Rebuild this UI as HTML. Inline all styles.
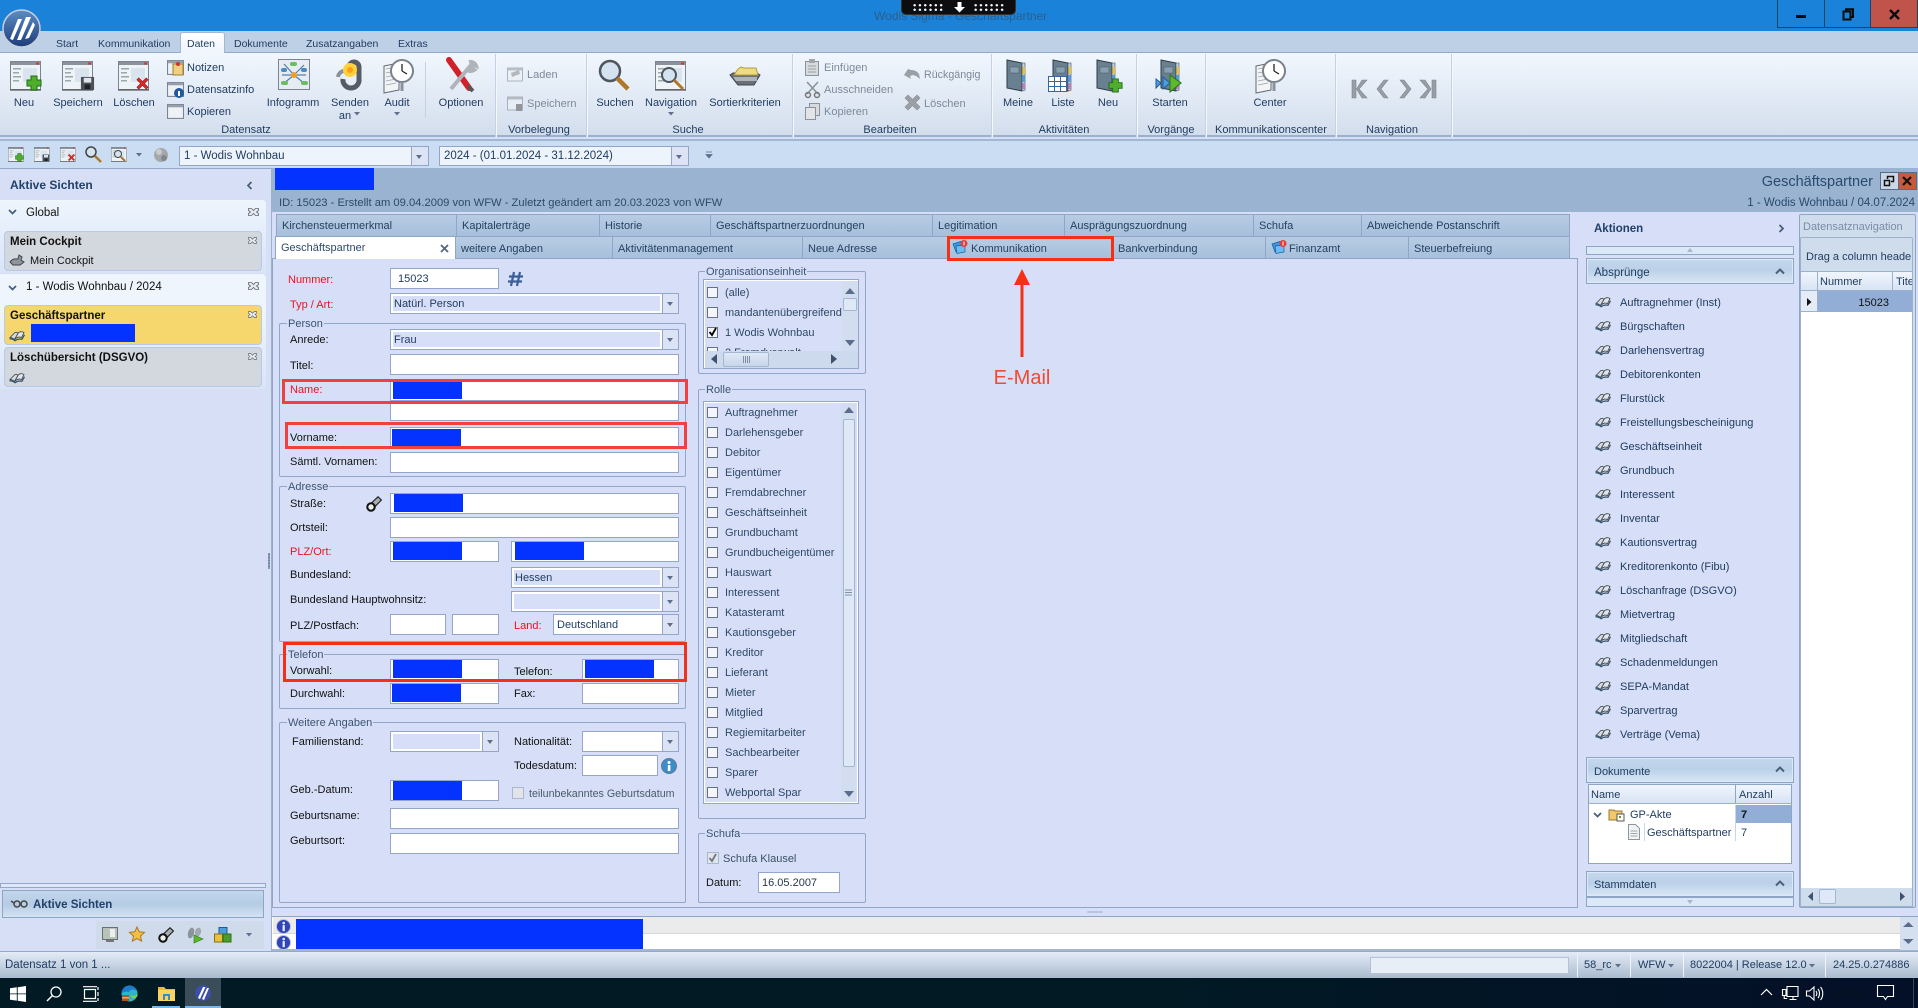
<!DOCTYPE html>
<html lang="de"><head><meta charset="utf-8"><title>Wodis Sigma - Geschäftspartner</title>
<style>
html,body{margin:0;padding:0;width:1918px;height:1008px;overflow:hidden;background:#d6dff7}
body{position:relative;font:11px/14px "Liberation Sans",sans-serif;color:#1e3a5f}
div,span,svg{position:absolute;box-sizing:border-box}
.t{white-space:nowrap;height:14px;margin-top:1px}
.l{width:110px;text-align:center;white-space:nowrap;height:14px;margin-top:1px}
.k{color:#111}.e{color:#ee1122}
.i{background:#fff;border:1px solid #93a5c8;color:#1e3a5f;padding:3px 0 0 7px;white-space:nowrap;height:21px}
.a{right:0;top:0;bottom:0;width:16px;border-left:1px solid #93a5c8;background:#dbe3f4}
.a:after{content:"";position:absolute;left:4px;top:8px;border:3px solid transparent;border-top:4px solid #5d6f8c;border-bottom:0}
.f{left:2px;top:2px;bottom:2px;right:18px;background:#d6dff7;padding:1px 0 0 1px;line-height:14px;color:#1e3a5f}
.b{background:#0433ff}
.rb{border:3px solid #f24040}
.c{width:11px;height:11px;background:#f3f5fb;border:1px solid #69727f;left:707px}
.cl{left:725px;color:#2d4866}
.g{border:1px solid #93a5c8;border-radius:2px}
.lg{background:#d6dff7;padding:0 1px;color:#3b5472;height:14px;white-space:nowrap;margin-top:1px}
.tab{height:23px;background:linear-gradient(#b8cde4,#a7bfdb);border:1px solid #8fa6c6;border-bottom:0;color:#24415f;padding:5px 0 0 5px;white-space:nowrap}
.hd{background:linear-gradient(#c4d8ec,#bbd1e8 45%,#d8e6f4);border:1px solid #8ea6c6;left:1586px;width:208px;height:26px;box-shadow:inset 0 0 0 1px #dce9f6}
.sep{width:1px;top:54px;height:83px;background:#c5d2e4;box-shadow:1px 0 #f4f8fd}
.ch{color:#425a78;font-weight:bold}
.rt{font-size:10.500px}
svg{overflow:visible}
</style></head><body>
<svg width="0" height="0" style="left:0;top:0">
<defs>
<symbol id="win" viewBox="0 0 32 30"><rect x=".5" y=".5" width="30" height="28" fill="#eef3f8" stroke="#7c8490"/><rect x="1" y="1" width="29" height="3" fill="#8a929e"/><rect x="26" y="1.5" width="3" height="2" fill="#d33"/><rect x="3" y="7" width="8" height="1.5" fill="#9aa"/><rect x="3" y="11" width="6" height="1.5" fill="#9aa"/><rect x="3" y="15" width="8" height="1.5" fill="#9aa"/><rect x="3" y="19" width="6" height="1.5" fill="#9aa"/><rect x="13" y="7" width="14" height="14" fill="#d9e4ef"/><rect x="0" y="28" width="31" height="2" fill="#555" opacity=".6"/></symbol>
<symbol id="plus" viewBox="0 0 16 16"><path d="M5 1h6v4h4v6h-4v4H5v-4H1V5h4z" fill="#4fae2c" stroke="#1f6e12"/></symbol>
<symbol id="x" viewBox="0 0 16 16"><path d="M2 4l2-2 4 4 4-4 2 2-4 4 4 4-2 2-4-4-4 4-2-2 4-4z" fill="#dc2a2a" stroke="#951414" stroke-width=".6"/></symbol>
<symbol id="floppy" viewBox="0 0 16 16"><rect x="1" y="1" width="14" height="14" fill="#4c5058"/><rect x="4" y="2" width="8" height="5" fill="#dfe5ec"/><rect x="5" y="9" width="6" height="5" fill="#1f2226"/></symbol>
<symbol id="book" viewBox="0 0 16 12"><path d="M1 7.500L6 2.500c1.500-.5 2.500 0 3 1L5.500 9.500C4 8 2.500 7.500 1 7.500z" fill="#d6dbe0" stroke="#3c444d" stroke-width=".8"/><path d="M9 3.500C10 2 12 1 15 2.500L12.500 7.500c-2.500-1-5 0-7 2z" fill="#e2e6ea" stroke="#3c444d" stroke-width=".8"/><path d="M.5 8.700c2 0 4 .5 5.500 2 2-1.500 4.500-2 7-1.500l2.500-4.500" fill="none" stroke="#34546f" stroke-width="1.300"/></symbol>
<symbol id="folder" viewBox="0 0 24 36"><path d="M3 2l15 3v28L3 30z" fill="#68808f" stroke="#2d3a45"/><path d="M18 5h3v27l-3 1z" fill="#c8d1d8" stroke="#3d4a55" stroke-width=".6"/><rect x="18.500" y="9" width="2.500" height="7" fill="#e8c23a"/><rect x="18.500" y="17" width="2.500" height="7" fill="#4fa0d8"/><rect x="18.500" y="25" width="2.500" height="6" fill="#c47ac4"/><rect x="6" y="9" width="9" height="6" fill="#88a0ae" stroke="#4a5a66" stroke-width=".5"/></symbol>
<symbol id="clock" viewBox="0 0 32 36"><path d="M2 8l15-3v27l-15 3z" fill="#f2f4f6" stroke="#616a74"/><path d="M4 11l10-2M4 15l10-2M4 19l10-2M4 23l10-2M4 27l10-2" stroke="#9aa3ad" stroke-width=".8"/><circle cx="20" cy="13" r="11" fill="#fff" stroke="#7a828c" stroke-width="2"/><path d="M20 13V6M20 13l5 3" stroke="#222" stroke-width="1.300" fill="none"/><rect x="18.500" y="24" width="3" height="9" fill="#8a929c"/></symbol>
<symbol id="mini" viewBox="0 0 16 16"><rect x=".5" y="1.500" width="15" height="13" fill="#eef2f7" stroke="#7c8490"/><rect x="1" y="2" width="14" height="2" fill="#939ba6"/></symbol>
<symbol id="mail" viewBox="0 0 16 14"><path d="M1 4l8-2.500 2 7.500-7 3z" fill="#3f9ae0" stroke="#135b9e" stroke-width=".7"/><path d="M4 6l9-1v7l-8 1.500z" fill="#6cbcf2" stroke="#135b9e" stroke-width=".7"/><circle cx="12" cy="3.500" r="3.500" fill="#e93a3a"/><rect x="11.500" y="1.500" width="1" height="4" fill="#fff"/></symbol>
<symbol id="info" viewBox="0 0 16 16"><circle cx="8" cy="8" r="7.500" fill="#2f45b8" stroke="#c3c8d4" stroke-width="1"/><rect x="7" y="6.500" width="2.400" height="6.500" fill="#e8ecf8"/><circle cx="8.200" cy="4.300" r="1.400" fill="#e8ecf8"/></symbol>
<symbol id="cl" viewBox="0 0 11 8"><path d="M.5.5h3l2 2 2-2h3v2l-2 1.500 2 1.500v2h-3l-2-2-2 2h-3v-2l2-1.500-2-1.500z" fill="#e8eaef" stroke="#5f6772" stroke-width=".8"/></symbol>
<symbol id="torch" viewBox="0 0 16 16"><path d="M6 6.500L12 .8 15.400 4 9.500 10z" fill="#a9aeb3" stroke="#222" stroke-width="1.200"/><circle cx="5" cy="11" r="3.700" fill="#eee" stroke="#111" stroke-width="2"/></symbol>
</defs></svg>

<!-- title bar -->
<div style="left:0;top:0;width:1918px;height:31px;background:#1a82d8"></div>
<div class="t" style="left:874px;top:8px;color:#2b5f8e;font-size:12px">Wodis Sigma - Geschäftspartner</div>
<div style="left:901px;top:0;width:115px;height:15px;background:#0d0d10;border:1px solid #333;border-top:0;border-radius:0 0 5px 5px"></div>
<div style="left:912px;top:3px;width:32px;height:8px;background-image:radial-gradient(#fff 1.200px,transparent 1.400px);background-size:5.300px 4.500px"></div>
<div style="left:973px;top:3px;width:32px;height:8px;background-image:radial-gradient(#fff 1.200px,transparent 1.400px);background-size:5.300px 4.500px"></div>
<svg style="left:954px;top:2px" width="11" height="11"><path d="M3.500 0h4v5h3.500L5.500 10.500 0 5h3.500z" fill="#fff"/></svg>
<div style="left:1777px;top:0;width:48px;height:28px;background:#1a82d8;border:1px solid #21425e;border-top:0"></div>
<div style="left:1825px;top:0;width:46px;height:28px;background:#1a82d8;border:1px solid #21425e;border-top:0;border-left:0"></div>
<div style="left:1871px;top:0;width:47px;height:28px;background:#c1544a;border:1px solid #21425e;border-top:0;border-left:0"></div>
<div style="left:1796px;top:15px;width:10px;height:3px;background:#0b0b0b"></div>
<svg style="left:1842px;top:8px" width="12" height="13"><path d="M1.500 3.500h7v8h-7zM4 3V1.200h7V9H9" fill="none" stroke="#0b0b0b" stroke-width="2"/></svg>
<svg style="left:1889px;top:9px" width="11" height="11"><path d="M1 1l9 9M10 1l-9 9" stroke="#0b0b0b" stroke-width="2.400"/></svg>
<!-- logo -->
<div style="left:0;top:31px;width:1918px;height:21px;background:#bed0e6"></div>
<div style="left:0;top:52px;width:1918px;height:1px;background:#93a9c7"></div>
<svg style="left:2px;top:9px" width="39" height="39" viewBox="0 0 39 39"><defs><linearGradient id="lg1" x1="0" y1="0" x2="0" y2="1"><stop offset="0" stop-color="#5d8cc4"/><stop offset="1" stop-color="#1d3c7a"/></linearGradient></defs><circle cx="19.500" cy="19.500" r="18.500" fill="url(#lg1)" stroke="#c6ced8" stroke-width="1.500"/><path d="M8 30L16 10h4L11 31zM15 31L24 8h5l-10 23zM23 30l8-17 2 3-6 13z" fill="#fff"/></svg>
<!-- ribbon tabs -->
<div style="left:180px;top:32px;width:45px;height:21px;background:linear-gradient(#fff,#eef5fd);border:1px solid #a4b7d1;border-bottom:0;border-radius:3px 3px 0 0"></div>
<div class="t rt" style="left:56px;top:36px">Start</div>
<div class="t rt" style="left:98px;top:36px">Kommunikation</div>
<div class="t rt" style="left:187px;top:36px">Daten</div>
<div class="t rt" style="left:234px;top:36px">Dokumente</div>
<div class="t rt" style="left:306px;top:36px">Zusatzangaben</div>
<div class="t rt" style="left:398px;top:36px">Extras</div>
<!-- ribbon -->
<div style="left:0;top:53px;width:1918px;height:84px;background:linear-gradient(#f1f7fe,#d3deed);border-bottom:2px solid #9bb0cc"></div>
<div class="sep" style="left:495px"></div><div class="sep" style="left:586px"></div><div class="sep" style="left:792px"></div><div class="sep" style="left:991px"></div><div class="sep" style="left:1136px"></div><div class="sep" style="left:1205px"></div><div class="sep" style="left:1335px"></div><div class="sep" style="left:1451px"></div>
<div style="left:425px;top:62px;width:1px;height:55px;background:#c5d2e4"></div>

<svg style="left:10px;top:61px" width="32" height="30"><use href="#win" width="32" height="30"/><use href="#plus" x="16" y="14" width="16" height="16"/></svg>
<svg style="left:62px;top:61px" width="32" height="30"><use href="#win" width="32" height="30"/><use href="#floppy" x="18" y="15" width="15" height="15"/></svg>
<svg style="left:118px;top:61px" width="32" height="30"><use href="#win" width="32" height="30"/><use href="#x" x="17" y="15" width="15" height="15"/></svg>
<svg style="left:167px;top:59px" width="17" height="17"><use href="#mini" width="17" height="17"/><rect x="6" y="5" width="10" height="11" fill="#eed080" stroke="#a08030"/><circle cx="11" cy="5" r="2" fill="#c33"/></svg>
<svg style="left:167px;top:81px" width="17" height="17"><use href="#mini" width="17" height="17"/><circle cx="12" cy="12" r="5" fill="#1e5a9c"/><rect x="11" y="10" width="2" height="5" fill="#fff"/></svg>
<svg style="left:167px;top:103px" width="17" height="17"><use href="#mini" width="17" height="17"/></svg>
<div class="t" style="left:187px;top:60px">Notizen</div><div class="t" style="left:187px;top:82px">Datensatzinfo</div><div class="t" style="left:187px;top:104px">Kopieren</div>
<svg style="left:278px;top:59px" width="32" height="31" viewBox="0 0 32 31"><rect x=".5" y=".5" width="31" height="30" fill="#e6ecf2" stroke="#7c8490"/><path d="M16 16L6 5M16 16L26 6M16 16L5 25M16 16L27 25M16 16H4M16 16h12" stroke="#4f7fb5" stroke-width="1.200"/><rect x="12" y="3" width="7" height="4" rx="2" fill="#6bbd5e"/><rect x="3" y="9" width="6" height="4" rx="2" fill="#4d8ac4"/><rect x="23" y="9" width="6" height="4" rx="2" fill="#4d8ac4"/><rect x="3" y="22" width="7" height="4" rx="2" fill="#6bbd5e"/><rect x="23" y="22" width="7" height="4" rx="2" fill="#6bbd5e"/><circle cx="16" cy="16" r="3" fill="#f0a020"/></svg>
<svg style="left:334px;top:59px" width="30" height="32" viewBox="0 0 30 32"><path d="M9 20a8 8 0 0 0 8 9 8 8 0 0 0 8-9V8a5 5 0 0 0-10 0" fill="none" stroke="#555c63" stroke-width="5"/><path d="M4 18a7 7 0 0 1 12-4" fill="none" stroke="#8b9299" stroke-width="4"/><circle cx="16" cy="11" r="7" fill="#ffd23c"/><circle cx="16" cy="11" r="3" fill="#ff9d1c"/></svg>
<svg style="left:382px;top:58px" width="32" height="36"><use href="#clock" width="32" height="36"/></svg>
<svg style="left:445px;top:58px" width="33" height="36" viewBox="0 0 33 36"><path d="M4 2L24 30" stroke="#d0222a" stroke-width="6" stroke-linecap="round"/><path d="M6 31L26 7M24 4a6 6 0 0 1 7 4l-4-1-2 3 4 2a6 6 0 0 1-8-1" fill="none" stroke="#aeb4ba" stroke-width="4"/><path d="M23 28l5 5" stroke="#555" stroke-width="4"/></svg>
<div class="l" style="left:-31px;top:95px">Neu</div>
<div class="l" style="left:23px;top:95px">Speichern</div>
<div class="l" style="left:79px;top:95px">Löschen</div>
<div class="l" style="left:238px;top:95px">Infogramm</div>
<div class="l" style="left:295px;top:95px">Senden</div>
<div class="l" style="left:290px;top:108px">an</div>
<div class="l" style="left:342px;top:95px">Audit</div>
<div class="l" style="left:406px;top:95px">Optionen</div>
<svg style="left:354px;top:112px" width="7" height="5"><path d="M0 0h6L3 3.500z" fill="#5d6f8c"/></svg>
<svg style="left:394px;top:112px" width="7" height="5"><path d="M0 0h6L3 3.500z" fill="#5d6f8c"/></svg>
<!-- Vorbelegung -->
<svg style="left:507px;top:66px" width="16" height="17" opacity=".55"><use href="#mini" width="16" height="17"/><path d="M4 7l8-3 1 4-8 3z" fill="#888"/></svg>
<svg style="left:507px;top:95px" width="16" height="17" opacity=".55"><use href="#mini" width="16" height="17"/><rect x="9" y="9" width="6" height="7" fill="#555"/></svg>
<div class="t" style="left:527px;top:67px;color:#7e8a99">Laden</div>
<div class="t" style="left:527px;top:96px;color:#7e8a99">Speichern</div>
<!-- Suche -->
<svg style="left:598px;top:59px" width="33" height="32" viewBox="0 0 33 32"><circle cx="12" cy="12" r="10" fill="#d5e2ef" stroke="#4e555d" stroke-width="2.500"/><path d="M19 19l11 11" stroke="#b0772b" stroke-width="4.500"/></svg>
<svg style="left:655px;top:61px" width="32" height="30"><use href="#win" width="32" height="30"/><circle cx="14" cy="14" r="7" fill="#d5e2ef" stroke="#4e555d" stroke-width="2"/><path d="M19 19l9 9" stroke="#b0772b" stroke-width="3"/></svg>
<svg style="left:729px;top:62px" width="32" height="28" viewBox="0 0 32 28"><path d="M1 13l8 10h16l6-10-3-2H4z" fill="#6a7076" stroke="#40464c"/><path d="M5 13l4-6 3-2 3 1h12l2 7z" fill="#f0dc80" stroke="#b09c40"/><path d="M4 15h24v4H7z" fill="#aeb4ba"/></svg>
<div class="l" style="left:560px;top:95px">Suchen</div>
<div class="l" style="left:616px;top:95px">Navigation</div>
<div class="l" style="left:690px;top:95px">Sortierkriterien</div>
<svg style="left:668px;top:112px" width="7" height="5"><path d="M0 0h6L3 3.500z" fill="#5d6f8c"/></svg>
<!-- Bearbeiten -->
<svg style="left:805px;top:59px" width="14" height="17"><rect x=".5" y="2.500" width="13" height="14" fill="#d8dbde" stroke="#8c929a"/><rect x="4" y="0" width="6" height="4" fill="#a0a6ac"/><path d="M3 7h8M3 10h8M3 13h8" stroke="#9aa0a6"/></svg>
<svg style="left:805px;top:81px" width="15" height="17"><path d="M2 1l11 12M13 1L2 13" stroke="#8c929a" stroke-width="1.600"/><circle cx="3" cy="14" r="2.500" fill="none" stroke="#777" stroke-width="1.500"/><circle cx="12" cy="14" r="2.500" fill="none" stroke="#777" stroke-width="1.500"/></svg>
<svg style="left:805px;top:103px" width="15" height="17"><rect x="4.500" y=".5" width="10" height="12" fill="#d8dbde" stroke="#8c929a"/><rect x=".5" y="4.500" width="10" height="12" fill="#e2e4e7" stroke="#8c929a"/></svg>
<div class="t" style="left:824px;top:60px;color:#7e8a99">Einfügen</div><div class="t" style="left:824px;top:82px;color:#7e8a99">Ausschneiden</div><div class="t" style="left:824px;top:104px;color:#7e8a99">Kopieren</div>
<svg style="left:904px;top:67px" width="16" height="13"><path d="M0 8l4-6 3 1c3 0 6 1 8 4l1 5-4-3-3-1-3 1 1 3z" fill="#9aa0a6"/></svg>
<svg style="left:904px;top:94px" width="17" height="17"><path d="M1 4l3-3 4.500 4.500L13 1l3 3-4.500 4.500L16 13l-3 3-4.500-4.500L4 16l-3-3 4.500-4.500z" fill="#9aa0a6" stroke="#868c92" stroke-width=".6"/></svg>
<div class="t" style="left:924px;top:67px;color:#7e8a99;font-size:10.700px">Rückgängig</div><div class="t" style="left:924px;top:96px;color:#7e8a99">Löschen</div>
<!-- Aktivitäten -->
<svg style="left:1004px;top:58px" width="24" height="34"><use href="#folder" width="24" height="36"/></svg>
<svg style="left:1048px;top:58px" width="28" height="34"><use href="#folder" x="2" width="24" height="36"/><rect x=".5" y="18.500" width="18" height="15" fill="#fff" stroke="#33689c"/><path d="M6.500 19v14M12.500 19v14M1 23.500h17M1 28.500h17" stroke="#33689c"/></svg>
<svg style="left:1094px;top:58px" width="30" height="36"><use href="#folder" width="24" height="36"/><use href="#plus" x="14" y="20" width="15" height="15"/></svg>
<svg style="left:1156px;top:58px" width="30" height="36"><use href="#folder" x="2" width="24" height="36"/><path d="M0 21l5 4-5 5zM7 19l7 6-7 6zM14 17l11 8-11 9z" fill="#4c9ed8" stroke="#1e5a9c"/><path d="M14 17l11 8-11 9z" fill="#5cb82c" stroke="#2b7412"/></svg>
<div class="l" style="left:963px;top:95px">Meine</div><div class="l" style="left:1008px;top:95px">Liste</div><div class="l" style="left:1053px;top:95px">Neu</div><div class="l" style="left:1115px;top:95px">Starten</div>
<svg style="left:1254px;top:58px" width="32" height="36"><use href="#clock" width="32" height="36"/></svg>
<div class="l" style="left:1215px;top:95px">Center</div>
<!-- nav arrows -->
<svg style="left:1352px;top:80px" width="86" height="19" fill="#989ea5" stroke="#7c838b" stroke-width=".6"><path d="M0 0h4v18H0zM15 0L7 9l8 9h-5L4.500 9 10 0z"/><path d="M36 0l-7 9 7 9h-4l-7-9 7-9z"/><path d="M48 0l7 9-7 9h4l7-9-7-9z"/><path d="M80 0h4v18h-4zM68 0l8 9-8 9h5l6-9-6-9z"/></svg>
<!-- group labels -->
<div class="l" style="left:191px;top:122px">Datensatz</div><div class="l" style="left:484px;top:122px">Vorbelegung</div><div class="l" style="left:633px;top:122px">Suche</div><div class="l" style="left:835px;top:122px">Bearbeiten</div><div class="l" style="left:1009px;top:122px">Aktivitäten</div><div class="l" style="left:1116px;top:122px">Vorgänge</div><div class="l" style="left:1215px;top:122px">Kommunikationscenter</div><div class="l" style="left:1337px;top:122px">Navigation</div>
<!-- quick toolbar -->
<div style="left:0;top:139px;width:1918px;height:2px;background:#a3b7d1"></div>
<div style="left:0;top:141px;width:1918px;height:27px;background:#cbddf2"></div>
<svg style="left:8px;top:147px" width="16" height="15"><use href="#win" width="16" height="15"/><use href="#plus" x="7" y="6" width="9" height="9"/></svg>
<svg style="left:34px;top:147px" width="16" height="15"><use href="#win" width="16" height="15"/><use href="#floppy" x="8" y="7" width="8" height="8"/></svg>
<svg style="left:60px;top:147px" width="16" height="15"><use href="#win" width="16" height="15"/><use href="#x" x="7" y="6" width="9" height="9"/></svg>
<svg style="left:85px;top:146px" width="17" height="16"><circle cx="6" cy="6" r="5" fill="#d5e2ef" stroke="#444" stroke-width="1.500"/><path d="M10 10l6 6" stroke="#b0772b" stroke-width="2.500"/></svg>
<svg style="left:111px;top:147px" width="16" height="15"><use href="#win" width="16" height="15"/><circle cx="7" cy="7" r="3.500" fill="#d5e2ef" stroke="#444"/><path d="M10 10l4 4" stroke="#b0772b" stroke-width="2"/></svg>
<svg style="left:136px;top:153px" width="7" height="5"><path d="M0 0h6L3 3.500z" fill="#5d6f8c"/></svg>
<svg style="left:153px;top:146px" width="17" height="17"><circle cx="8" cy="9" r="7" fill="#a5a8aa"/><circle cx="6" cy="6" r="3" fill="#c8cacb"/><circle cx="11" cy="12" r="3" fill="#83878a"/></svg>
<div class="i" style="left:179px;top:146px;width:250px;height:20px;padding:2px 0 0 4px;background:#eef4fc;color:#1e3a5f;font-size:11.500px">1 - Wodis Wohnbau<div class="a" style="width:17px"></div></div>
<div class="i" style="left:439px;top:146px;width:250px;height:20px;padding:2px 0 0 4px;background:#eef4fc;font-size:11.500px">2024 - (01.01.2024 - 31.12.2024)<div class="a" style="width:17px"></div></div>
<svg style="left:706px;top:152px" width="7" height="8"><path d="M0 0h6M0 2.500h6L3 6z" stroke="#5d6f8c" fill="#5d6f8c" stroke-width=".8"/></svg>

<!-- left panel -->
<div style="left:0;top:168px;width:272px;height:783px;background:#d7dff7;border-top:1px solid #94aac8;border-right:1px solid #9db1cd"></div>
<div class="t" style="left:10px;top:177px;font-weight:bold;font-size:12px;color:#21406a">Aktive Sichten</div>
<svg style="left:246px;top:181px" width="7" height="9"><path d="M5.500 1L2 4.500 5.500 8" fill="none" stroke="#4a5f7a" stroke-width="1.800"/></svg>
<div style="left:0;top:200px;width:266px;height:73px;background:linear-gradient(#eef5fd,#d9e4f7);border-radius:0 4px 0 0"></div>
<div style="left:0;top:274px;width:266px;height:115px;background:linear-gradient(#eef5fd 40px,#d9e4f7);border-radius:0 4px 0 0"></div>
<svg style="left:8px;top:209px" width="9" height="6"><path d="M1 1l3.500 3.500L8 1" fill="none" stroke="#4a5f7a" stroke-width="1.800"/></svg>
<div class="t k" style="left:26px;top:205px;font-size:11.500px">Global</div>
<svg style="left:248px;top:208px" width="11" height="8"><use href="#cl" width="11" height="8"/></svg>
<div style="left:4px;top:231px;width:258px;height:40px;background:#d3d7de;border:1px solid #b6c9ea;border-radius:4px"></div>
<div class="t k" style="left:10px;top:234px;font-weight:bold;font-size:11.500px">Mein Cockpit</div>
<svg style="left:248px;top:237px" width="9" height="7"><use href="#cl" width="9" height="7"/></svg>
<svg style="left:9px;top:254px" width="16" height="12"><path d="M1 8c3-4 6-3 8-3l1-4 3 2-1 3 3 2-4 3H4z" fill="#8f959a" stroke="#3d444b"/></svg>
<div class="t k" style="left:30px;top:253px">Mein Cockpit</div>
<svg style="left:8px;top:285px" width="9" height="6"><path d="M1 1l3.500 3.500L8 1" fill="none" stroke="#4a5f7a" stroke-width="1.800"/></svg>
<div class="t k" style="left:26px;top:279px;font-size:11.500px">1 - Wodis Wohnbau / 2024</div>
<svg style="left:248px;top:282px" width="11" height="8"><use href="#cl" width="11" height="8"/></svg>
<div style="left:4px;top:305px;width:258px;height:40px;background:#f5d76e;border:1px solid #b6c9ea;border-radius:4px"></div>
<div class="t k" style="left:10px;top:308px;font-weight:bold;font-size:11.500px">Geschäftspartner</div>
<svg style="left:248px;top:311px" width="9" height="7"><use href="#cl" width="9" height="7"/></svg>
<svg style="left:9px;top:330px" width="16" height="12"><use href="#book" width="16" height="12"/></svg>
<div class="b" style="left:31px;top:324px;width:104px;height:18px"></div>
<div style="left:4px;top:347px;width:258px;height:40px;background:#d3d7de;border:1px solid #b6c9ea;border-radius:4px"></div>
<div class="t k" style="left:10px;top:350px;font-weight:bold;font-size:11.500px">Löschübersicht (DSGVO)</div>
<svg style="left:248px;top:353px" width="9" height="7"><use href="#cl" width="9" height="7"/></svg>
<svg style="left:9px;top:372px" width="16" height="12"><use href="#book" width="16" height="12"/></svg>
<div style="left:268px;top:553px;width:2px;height:16px;background-image:radial-gradient(#6f84a2 1px,transparent 1px);background-size:2px 3px"></div>
<div style="left:0;top:883px;width:266px;height:5px;border:1px solid #93a9c7;background:#dce7f8"></div>
<div style="left:2px;top:890px;width:262px;height:28px;background:linear-gradient(#c3d7ec,#b5cce4 50%,#d3e2f2);border:1px solid #8ea6c6"></div>
<svg style="left:11px;top:899px" width="16" height="9"><circle cx="6" cy="5" r="3" fill="none" stroke="#444" stroke-width="1.500"/><circle cx="13" cy="5" r="3" fill="none" stroke="#444" stroke-width="1.500"/><path d="M3 4L0 2" stroke="#444" stroke-width="1.500"/></svg>
<div class="t" style="left:33px;top:897px;font-weight:bold;font-size:11.500px;color:#21406a">Aktive Sichten</div>
<div style="left:96px;top:921px;width:168px;height:28px;background:#cfdbeb"></div>
<svg style="left:102px;top:927px" width="16" height="16"><rect x=".5" y=".5" width="15" height="12" fill="#b7c2b8" stroke="#6a6f74"/><rect x="8" y="2" width="5" height="8" fill="#eee"/><rect x="4" y="13" width="8" height="2" fill="#777"/></svg>
<svg style="left:129px;top:926px" width="16" height="16"><path d="M8 1l2.200 4.800 5.300.6-4 3.600 1.100 5.200L8 12.600l-4.600 2.600L4.500 10 .5 6.400l5.300-.6z" fill="#f2c040" stroke="#a8782a"/></svg>
<svg style="left:158px;top:927px" width="16" height="16"><use href="#torch" width="16" height="16"/></svg>
<svg style="left:186px;top:927px" width="17" height="16"><ellipse cx="5" cy="6" rx="3" ry="5.500" fill="#8b939c" transform="rotate(15 5 6)"/><ellipse cx="12" cy="5" rx="3" ry="4.500" fill="#a0a8b0" transform="rotate(15 12 5)"/><path d="M8 8l9 4-9 4z" fill="#5cb82c" stroke="#2b7412" stroke-width=".6"/></svg>
<svg style="left:214px;top:927px" width="17" height="16"><rect x="5" y=".5" width="8" height="8" fill="#4c9ed8" stroke="#1e5a9c"/><rect x=".5" y="7" width="8" height="8" fill="#e8c23a" stroke="#8a6f18"/><rect x="9" y="7" width="8" height="8" fill="#4c9b2c" stroke="#2b6f12"/></svg>
<svg style="left:246px;top:933px" width="7" height="5"><path d="M0 0h6L3 3.500z" fill="#5d6f8c"/></svg>

<!-- main header -->
<div style="left:272px;top:168px;width:1646px;height:44px;background:#99b3d0"></div>
<div style="left:272px;top:212px;width:1646px;height:704px;background:#d6dff7"></div>
<div class="b" style="left:275px;top:168px;width:99px;height:22px"></div>
<div class="t" style="left:279px;top:195px;color:#2d4a68;font-size:11.200px">ID: 15023 - Erstellt am 09.04.2009 von WFW - Zuletzt geändert am 20.03.2023 von WFW</div>
<div class="t" style="right:45px;top:172px;font-size:14.500px;height:18px;line-height:18px;color:#2a4a6e">Geschäftspartner</div>
<div style="left:1880px;top:172px;width:19px;height:18px;background:#cad7e6;border:1px solid #566d89"></div>
<div style="left:1898px;top:172px;width:19px;height:18px;background:#c8583e;border:1px solid #566d89"></div>
<svg style="left:1883px;top:175px" width="12" height="12"><path d="M1.500 5.500h5v5h-5zM4.500 4V1.500h6v5H8" fill="none" stroke="#111" stroke-width="1.500"/></svg>
<svg style="left:1902px;top:176px" width="10" height="10"><path d="M1 1l8 8M9 1L1 9" stroke="#111" stroke-width="2.200"/></svg>
<div class="t" style="right:3px;top:195px;font-size:11.500px;color:#2a4a6e">1 - Wodis Wohnbau / 04.07.2024</div>

<!-- tabs -->
<div class="tab" style="left:276px;top:214px;width:181px;height:22px;padding-top:4px">Kirchensteuermerkmal</div>
<div class="tab" style="left:456px;top:214px;width:144px;height:22px;padding-top:4px">Kapitalerträge</div>
<div class="tab" style="left:599px;top:214px;width:112px;height:22px;padding-top:4px">Historie</div>
<div class="tab" style="left:710px;top:214px;width:223px;height:22px;padding-top:4px">Geschäftspartnerzuordnungen</div>
<div class="tab" style="left:932px;top:214px;width:133px;height:22px;padding-top:4px">Legitimation</div>
<div class="tab" style="left:1064px;top:214px;width:190px;height:22px;padding-top:4px">Ausprägungszuordnung</div>
<div class="tab" style="left:1253px;top:214px;width:109px;height:22px;padding-top:4px">Schufa</div>
<div class="tab" style="left:1361px;top:214px;width:209px;height:22px;padding-top:4px">Abweichende Postanschrift</div>
<div class="tab" style="left:455px;top:236px;width:158px">weitere Angaben</div>
<div class="tab" style="left:612px;top:236px;width:191px">Aktivitätenmanagement</div>
<div class="tab" style="left:802px;top:236px;width:146px">Neue Adresse</div>
<div class="tab" style="left:947px;top:236px;width:166px;padding-left:23px">Kommunikation</div>
<div class="tab" style="left:1112px;top:236px;width:154px">Bankverbindung</div>
<div class="tab" style="left:1265px;top:236px;width:144px;padding-left:23px">Finanzamt</div>
<div class="tab" style="left:1408px;top:236px;width:162px">Steuerbefreiung</div>
<svg style="left:952px;top:240px" width="16" height="14"><use href="#mail" width="16" height="14"/></svg>
<svg style="left:1271px;top:240px" width="16" height="14"><use href="#mail" width="16" height="14"/></svg>
<!-- form panel -->
<div style="left:272px;top:258px;width:1306px;height:650px;background:#d6dff7;border:1px solid #8fa6c6;border-bottom-width:1px"></div>
<div style="left:275px;top:236px;width:181px;height:23px;background:#fff;border:1px solid #8fa6c6;border-bottom:0;padding:4px 0 0 5px;color:#2d4a68;white-space:nowrap">Geschäftspartner</div>
<svg style="left:440px;top:244px" width="9" height="9"><path d="M1 1l7 7M8 1L1 8" stroke="#56677e" stroke-width="1.800"/></svg>

<div class="t e" style="left:288px;top:272px">Nummer:</div>
<div class="i" style="left:390px;top:268px;width:109px">15023</div>
<svg style="left:508px;top:271px" width="16" height="16" viewBox="0 0 16 16"><path d="M6 1L3 15M12 1L9 15M1 5.500h14M0 10.500h14" stroke="#3a5f98" stroke-width="2.200"/></svg>
<div class="t e" style="left:290px;top:297px">Typ / Art:</div>
<div class="i" style="left:390px;top:293px;width:289px"><div class="f">Natürl. Person</div><div class="a"></div></div>

<!-- Person -->
<div class="g" style="left:279px;top:323px;width:407px;height:154px"></div>
<div class="lg" style="left:287px;top:316px">Person</div>
<div class="t k" style="left:290px;top:332px">Anrede:</div>
<div class="i" style="left:390px;top:329px;width:289px"><div class="f">Frau</div><div class="a"></div></div>
<div class="t k" style="left:290px;top:358px">Titel:</div>
<div class="i" style="left:390px;top:354px;width:289px"></div>
<div class="t e" style="left:290px;top:382px">Name:</div>
<div class="i" style="left:390px;top:380px;width:289px"></div>
<div class="b" style="left:393px;top:381px;width:69px;height:18px"></div>
<div class="i" style="left:390px;top:400px;width:289px"></div>
<div class="t k" style="left:290px;top:430px">Vorname:</div>
<div class="i" style="left:390px;top:427px;width:289px"></div>
<div class="b" style="left:392px;top:429px;width:69px;height:17px"></div>
<div class="t k" style="left:290px;top:454px">Sämtl. Vornamen:</div>
<div class="i" style="left:390px;top:452px;width:289px"></div>

<!-- Adresse -->
<div class="g" style="left:279px;top:486px;width:407px;height:156px"></div>
<div class="lg" style="left:287px;top:479px">Adresse</div>
<div class="t k" style="left:290px;top:496px">Straße:</div>
<svg style="left:366px;top:496px" width="16" height="16"><use href="#torch" width="16" height="16"/></svg>
<div class="i" style="left:390px;top:493px;width:289px"></div>
<div class="b" style="left:394px;top:494px;width:69px;height:18px"></div>
<div class="t k" style="left:290px;top:520px">Ortsteil:</div>
<div class="i" style="left:390px;top:517px;width:289px"></div>
<div class="t e" style="left:290px;top:544px">PLZ/Ort:</div>
<div class="i" style="left:390px;top:541px;width:109px"></div>
<div class="b" style="left:393px;top:542px;width:69px;height:18px"></div>
<div class="i" style="left:511px;top:541px;width:168px"></div>
<div class="b" style="left:515px;top:542px;width:69px;height:18px"></div>
<div class="t k" style="left:290px;top:567px">Bundesland:</div>
<div class="i" style="left:511px;top:567px;width:168px"><div class="f">Hessen</div><div class="a"></div></div>
<div class="t k" style="left:290px;top:592px">Bundesland Hauptwohnsitz:</div>
<div class="i" style="left:511px;top:591px;width:168px"><div class="f"></div><div class="a"></div></div>
<div class="t k" style="left:290px;top:618px">PLZ/Postfach:</div>
<div class="i" style="left:390px;top:614px;width:56px"></div>
<div class="i" style="left:452px;top:614px;width:47px"></div>
<div class="t e" style="left:514px;top:618px">Land:</div>
<div class="i" style="left:553px;top:614px;width:126px;padding-left:3px">Deutschland<div class="a"></div></div>

<!-- Telefon -->
<div class="g" style="left:279px;top:654px;width:407px;height:55px"></div>
<div class="lg" style="left:287px;top:647px">Telefon</div>
<div class="t k" style="left:290px;top:663px">Vorwahl:</div>
<div class="i" style="left:390px;top:659px;width:109px"></div>
<div class="b" style="left:393px;top:660px;width:69px;height:18px"></div>
<div class="t k" style="left:514px;top:664px">Telefon:</div>
<div class="i" style="left:582px;top:659px;width:97px"></div>
<div class="b" style="left:585px;top:660px;width:69px;height:18px"></div>
<div class="t k" style="left:290px;top:686px">Durchwahl:</div>
<div class="i" style="left:390px;top:683px;width:109px"></div>
<div class="b" style="left:392px;top:684px;width:69px;height:18px"></div>
<div class="t k" style="left:514px;top:686px">Fax:</div>
<div class="i" style="left:582px;top:683px;width:97px"></div>

<!-- Weitere -->
<div class="g" style="left:279px;top:722px;width:407px;height:181px"></div>
<div class="lg" style="left:287px;top:715px">Weitere Angaben</div>
<div class="t k" style="left:292px;top:734px">Familienstand:</div>
<div class="i" style="left:390px;top:731px;width:109px"><div class="f"></div><div class="a"></div></div>
<div class="t k" style="left:514px;top:734px">Nationalität:</div>
<div class="i" style="left:582px;top:731px;width:97px"><div class="a"></div></div>
<div class="t k" style="left:514px;top:758px">Todesdatum:</div>
<div class="i" style="left:582px;top:755px;width:76px"></div>
<svg style="left:661px;top:757px" width="16" height="18" viewBox="0 0 16 18"><circle cx="8" cy="9" r="7.500" fill="#3f8cc9" stroke="#607a92"/><rect x="6.800" y="8" width="2.600" height="6" fill="#fff"/><circle cx="8" cy="5.500" r="1.500" fill="#fff"/></svg>
<div class="t k" style="left:290px;top:782px">Geb.-Datum:</div>
<div class="i" style="left:390px;top:780px;width:109px"></div>
<div class="b" style="left:393px;top:781px;width:69px;height:19px"></div>
<div style="left:512px;top:787px;width:12px;height:12px;background:#e2e4e8;border:1px solid #a9b8d2"></div>
<div class="t" style="left:529px;top:786px;color:#4a5a6a;font-size:10.700px">teilunbekanntes Geburtsdatum</div>
<div class="t k" style="left:290px;top:808px">Geburtsname:</div>
<div class="i" style="left:390px;top:808px;width:289px"></div>
<div class="t k" style="left:290px;top:833px">Geburtsort:</div>
<div class="i" style="left:390px;top:833px;width:289px"></div>

<!-- Org -->
<div class="g" style="left:698px;top:271px;width:168px;height:103px"></div>
<div class="lg" style="left:705px;top:264px">Organisationseinheit</div>
<div style="left:703px;top:279px;width:156px;height:90px;border:1px solid #93a5c8;box-shadow:inset 0 0 0 1px #fff;overflow:hidden">
<div class="c" style="left:3px;top:7px"></div><div class="t cl" style="left:21px;top:5px">(alle)</div>
<div class="c" style="left:3px;top:27px"></div><div class="t cl" style="left:21px;top:25px">mandantenübergreifend</div>
<div class="c" style="left:3px;top:47px"></div><div class="t cl" style="left:21px;top:45px">1 Wodis Wohnbau</div>
<svg style="left:4px;top:47px" width="10" height="10"><path d="M1.500 5l2.500 3 4-7" fill="none" stroke="#000" stroke-width="1.800"/></svg>
<div class="c" style="left:3px;top:67px"></div><div class="t cl" style="left:21px;top:65px">2 Fremdverwalt</div>
<div style="left:138px;top:1px;width:16px;height:70px;background:#d2def0"></div>
<div style="left:1px;top:71px;width:153px;height:17px;background:#cdd9ec"></div>
<div style="left:139px;top:18px;width:14px;height:13px;background:#dfe8f6;border:1px solid #a3b7d2;border-radius:2px"></div>
<svg style="left:140px;top:8px" width="12" height="7"><path d="M6 0l5 6H1z" fill="#5a6d8c"/></svg>
<svg style="left:140px;top:60px" width="12" height="7"><path d="M6 6l5-6H1z" fill="#5a6d8c"/></svg>
<div style="left:19px;top:72px;width:46px;height:15px;background:linear-gradient(#e0e9f6,#c7d6ea);border:1px solid #a3b7d2;border-radius:2px"></div>
<svg style="left:39px;top:76px" width="8" height="7"><path d="M.5 0v7M2.500 0v7M4.500 0v7M6.500 0v7" stroke="#7f8fa8"/></svg>
<svg style="left:7px;top:74px" width="7" height="11"><path d="M6 0v10L0 5z" fill="#3e5270"/></svg>
<svg style="left:126px;top:74px" width="7" height="11"><path d="M1 0v10l6-5z" fill="#3e5270"/></svg>
</div>

<!-- Rolle -->
<div class="g" style="left:698px;top:389px;width:168px;height:430px"></div>
<div class="lg" style="left:705px;top:382px">Rolle</div>
<div style="left:703px;top:401px;width:156px;height:403px;border:1px solid #93a5c8;box-shadow:inset 0 0 0 1px #fff"></div>
<div style="left:841px;top:403px;width:15px;height:399px;background:#d2def0"></div>
<div style="left:843px;top:419px;width:12px;height:348px;background:#dfe8f6;border:1px solid #a3b7d2;border-radius:2px"></div>
<svg style="left:843px;top:407px" width="12" height="7"><path d="M6 0l5 6H1z" fill="#5a6d8c"/></svg>
<svg style="left:843px;top:791px" width="12" height="7"><path d="M6 6l5-6H1z" fill="#5a6d8c"/></svg>
<svg style="left:845px;top:589px" width="8" height="8"><path d="M0 1h7M0 3.500h7M0 6h7" stroke="#7f8fa8"/></svg>
<div class="c" style="top:407px"></div><div class="t cl" style="top:405px">Auftragnehmer</div>
<div class="c" style="top:427px"></div><div class="t cl" style="top:425px">Darlehensgeber</div>
<div class="c" style="top:447px"></div><div class="t cl" style="top:445px">Debitor</div>
<div class="c" style="top:467px"></div><div class="t cl" style="top:465px">Eigentümer</div>
<div class="c" style="top:487px"></div><div class="t cl" style="top:485px">Fremdabrechner</div>
<div class="c" style="top:507px"></div><div class="t cl" style="top:505px">Geschäftseinheit</div>
<div class="c" style="top:527px"></div><div class="t cl" style="top:525px">Grundbuchamt</div>
<div class="c" style="top:547px"></div><div class="t cl" style="top:545px">Grundbucheigentümer</div>
<div class="c" style="top:567px"></div><div class="t cl" style="top:565px">Hauswart</div>
<div class="c" style="top:587px"></div><div class="t cl" style="top:585px">Interessent</div>
<div class="c" style="top:607px"></div><div class="t cl" style="top:605px">Katasteramt</div>
<div class="c" style="top:627px"></div><div class="t cl" style="top:625px">Kautionsgeber</div>
<div class="c" style="top:647px"></div><div class="t cl" style="top:645px">Kreditor</div>
<div class="c" style="top:667px"></div><div class="t cl" style="top:665px">Lieferant</div>
<div class="c" style="top:687px"></div><div class="t cl" style="top:685px">Mieter</div>
<div class="c" style="top:707px"></div><div class="t cl" style="top:705px">Mitglied</div>
<div class="c" style="top:727px"></div><div class="t cl" style="top:725px">Regiemitarbeiter</div>
<div class="c" style="top:747px"></div><div class="t cl" style="top:745px">Sachbearbeiter</div>
<div class="c" style="top:767px"></div><div class="t cl" style="top:765px">Sparer</div>
<div class="c" style="top:787px"></div><div class="t cl" style="top:785px">Webportal Spar</div>

<!-- Schufa -->
<div class="g" style="left:698px;top:833px;width:168px;height:70px"></div>
<div class="lg" style="left:705px;top:826px">Schufa</div>
<div style="left:707px;top:852px;width:12px;height:12px;background:#e2e4e8;border:1px solid #a9b8d2"></div>
<svg style="left:708px;top:853px" width="10" height="10"><path d="M1.500 5l2.500 3 4-7" fill="none" stroke="#6a7788" stroke-width="1.800"/></svg>
<div class="t" style="left:723px;top:851px;color:#3b5068">Schufa Klausel</div>
<div class="t k" style="left:706px;top:875px">Datum:</div>
<div class="i" style="left:758px;top:872px;width:82px;padding-left:3px;color:#22384f">16.05.2007</div>

<!-- red annotations -->
<div class="rb" style="left:282px;top:379px;width:406px;height:25px"></div>
<div class="rb" style="left:285px;top:422px;width:402px;height:27px"></div>
<div class="rb" style="left:283px;top:642px;width:404px;height:40px;border-color:#f43018"></div>
<div class="rb" style="left:947px;top:236px;width:167px;height:25px;border-color:#f43018"></div>
<svg style="left:1013px;top:268px" width="18" height="90"><path d="M9 1l8 16h-6.500v72h-3V17H1z" fill="#f43018"/></svg>
<div class="t" style="left:992px;top:366px;width:60px;height:23px;line-height:23px;text-align:center;font-size:20px;color:#f04a30">E-Mail</div>

<!-- Aktionen -->
<div class="t" style="left:1594px;top:221px;font-weight:bold;font-size:11.500px;color:#21406a">Aktionen</div>
<svg style="left:1778px;top:224px" width="7" height="9"><path d="M1.500 1L5 4.500 1.500 8" fill="none" stroke="#4a5f7a" stroke-width="1.800"/></svg>
<div style="left:1586px;top:246px;width:208px;height:9px;background:#dbe8f8;border:1px solid #8ea6c6"></div>
<svg style="left:1686px;top:248px" width="8" height="5"><path d="M4 0l3 4H1z" fill="#a9b8cc"/></svg>
<div class="hd" style="top:258px"></div>
<div class="t" style="left:1594px;top:265px;font-size:11.500px">Absprünge</div>
<svg style="left:1775px;top:268px" width="10" height="7"><path d="M1 5.500L5 1.500l4 4" fill="none" stroke="#4a5f7a" stroke-width="2"/></svg>
<svg style="left:1595px;top:296px" width="16" height="12"><use href="#book" width="16" height="12"/></svg><div class="t" style="left:1620px;top:295px">Auftragnehmer (Inst)</div>
<svg style="left:1595px;top:320px" width="16" height="12"><use href="#book" width="16" height="12"/></svg><div class="t" style="left:1620px;top:319px">Bürgschaften</div>
<svg style="left:1595px;top:344px" width="16" height="12"><use href="#book" width="16" height="12"/></svg><div class="t" style="left:1620px;top:343px">Darlehensvertrag</div>
<svg style="left:1595px;top:368px" width="16" height="12"><use href="#book" width="16" height="12"/></svg><div class="t" style="left:1620px;top:367px">Debitorenkonten</div>
<svg style="left:1595px;top:392px" width="16" height="12"><use href="#book" width="16" height="12"/></svg><div class="t" style="left:1620px;top:391px">Flurstück</div>
<svg style="left:1595px;top:416px" width="16" height="12"><use href="#book" width="16" height="12"/></svg><div class="t" style="left:1620px;top:415px">Freistellungsbescheinigung</div>
<svg style="left:1595px;top:440px" width="16" height="12"><use href="#book" width="16" height="12"/></svg><div class="t" style="left:1620px;top:439px">Geschäftseinheit</div>
<svg style="left:1595px;top:464px" width="16" height="12"><use href="#book" width="16" height="12"/></svg><div class="t" style="left:1620px;top:463px">Grundbuch</div>
<svg style="left:1595px;top:488px" width="16" height="12"><use href="#book" width="16" height="12"/></svg><div class="t" style="left:1620px;top:487px">Interessent</div>
<svg style="left:1595px;top:512px" width="16" height="12"><use href="#book" width="16" height="12"/></svg><div class="t" style="left:1620px;top:511px">Inventar</div>
<svg style="left:1595px;top:536px" width="16" height="12"><use href="#book" width="16" height="12"/></svg><div class="t" style="left:1620px;top:535px">Kautionsvertrag</div>
<svg style="left:1595px;top:560px" width="16" height="12"><use href="#book" width="16" height="12"/></svg><div class="t" style="left:1620px;top:559px">Kreditorenkonto (Fibu)</div>
<svg style="left:1595px;top:584px" width="16" height="12"><use href="#book" width="16" height="12"/></svg><div class="t" style="left:1620px;top:583px">Löschanfrage (DSGVO)</div>
<svg style="left:1595px;top:608px" width="16" height="12"><use href="#book" width="16" height="12"/></svg><div class="t" style="left:1620px;top:607px">Mietvertrag</div>
<svg style="left:1595px;top:632px" width="16" height="12"><use href="#book" width="16" height="12"/></svg><div class="t" style="left:1620px;top:631px">Mitgliedschaft</div>
<svg style="left:1595px;top:656px" width="16" height="12"><use href="#book" width="16" height="12"/></svg><div class="t" style="left:1620px;top:655px">Schadenmeldungen</div>
<svg style="left:1595px;top:680px" width="16" height="12"><use href="#book" width="16" height="12"/></svg><div class="t" style="left:1620px;top:679px">SEPA-Mandat</div>
<svg style="left:1595px;top:704px" width="16" height="12"><use href="#book" width="16" height="12"/></svg><div class="t" style="left:1620px;top:703px">Sparvertrag</div>
<svg style="left:1595px;top:728px" width="16" height="12"><use href="#book" width="16" height="12"/></svg><div class="t" style="left:1620px;top:727px">Verträge (Vema)</div>

<div class="hd" style="top:757px"></div>
<div class="t" style="left:1594px;top:764px">Dokumente</div>
<svg style="left:1775px;top:766px" width="10" height="7"><path d="M1 5.500L5 1.500l4 4" fill="none" stroke="#4a5f7a" stroke-width="2"/></svg>
<div style="left:1588px;top:784px;width:204px;height:80px;background:#fff;border:1px solid #8ea6c6"></div>
<div style="left:1589px;top:785px;width:202px;height:19px;background:linear-gradient(#f1f6fd,#d7e4f4);border-bottom:1px solid #9db1cd"></div>
<div style="left:1735px;top:785px;width:1px;height:19px;background:#8ea6c6"></div>
<div class="t" style="left:1591px;top:787px">Name</div><div class="t" style="left:1739px;top:787px">Anzahl</div>
<div style="left:1736px;top:805px;width:55px;height:18px;background:#92aed6"></div>
<svg style="left:1593px;top:812px" width="9" height="6"><path d="M1 1l3.500 3.500L8 1" fill="none" stroke="#4a5f7a" stroke-width="1.800"/></svg>
<svg style="left:1608px;top:807px" width="17" height="15" viewBox="0 0 17 15"><path d="M1 3h5l1 1h7v9H1z" fill="#f1c86a" stroke="#9a7a30"/><rect x="9" y="7" width="7" height="7" fill="#fff" stroke="#555"/><rect x="11" y="9" width="2" height="2" fill="#5c9a2c"/></svg>
<div class="t" style="left:1630px;top:807px">GP-Akte</div><div class="t k" style="left:1741px;top:807px;font-weight:bold">7</div>
<svg style="left:1628px;top:824px" width="12" height="16"><path d="M.5.500h7l4 4v11H.5z" fill="#f2f3f5" stroke="#8f959c"/><path d="M2.500 7h7M2.500 9.500h7M2.500 12h7" stroke="#a0a6ac"/></svg>
<div class="t" style="left:1647px;top:825px">Geschäftspartner</div><div class="t" style="left:1741px;top:825px">7</div>
<div style="left:1644px;top:823px;width:1px;height:18px;background:#c9d6e8"></div>
<div style="left:1735px;top:805px;width:1px;height:36px;background:#c9d6e8"></div>
<div class="hd" style="top:871px"></div>
<div class="t" style="left:1594px;top:877px">Stammdaten</div>
<svg style="left:1775px;top:880px" width="10" height="7"><path d="M1 5.500L5 1.500l4 4" fill="none" stroke="#4a5f7a" stroke-width="2"/></svg>
<div style="left:1586px;top:897px;width:208px;height:10px;background:#dbe8f8;border:1px solid #8ea6c6"></div>
<svg style="left:1686px;top:900px" width="8" height="5"><path d="M4 4l3-4H1z" fill="#a9b8cc"/></svg>

<!-- Datensatznavigation -->
<div style="left:1799px;top:214px;width:117px;height:694px;background:#cfdceb;border:1px solid #8ea6c6;border-radius:2px"></div>
<div class="t" style="left:1803px;top:219px;color:#7a8ca8">Datensatznavigation</div>
<div style="left:1800px;top:237px;width:113px;height:670px;background:#cfdceb;border:1px solid #9db1cd;border-radius:2px 2px 0 0"></div>
<div class="t" style="left:1806px;top:249px;width:105px;overflow:hidden">Drag a column heade</div>
<div style="left:1801px;top:271px;width:111px;height:617px;background:#fff"></div>
<div style="left:1801px;top:271px;width:111px;height:20px;background:linear-gradient(#f1f6fd,#d7e4f4);border-top:1px solid #9db1cd;border-bottom:1px solid #9db1cd"></div>
<div style="left:1817px;top:272px;width:1px;height:40px;background:#9db1cd"></div>
<div style="left:1892px;top:272px;width:1px;height:19px;background:#9db1cd"></div>
<div class="t" style="left:1820px;top:274px">Nummer</div><div class="t" style="left:1896px;top:274px;width:16px;overflow:hidden">Titel</div>
<div style="left:1818px;top:291px;width:94px;height:21px;background:#92aed6"></div>
<div style="left:1801px;top:291px;width:16px;height:21px;background:#e4ecf7;border-bottom:1px solid #9db1cd"></div>
<svg style="left:1807px;top:298px" width="5" height="8"><path d="M0 0l4.500 4L0 8z" fill="#111"/></svg>
<div class="t k" style="left:1849px;top:295px;width:40px;text-align:right">15023</div>
<div style="left:1801px;top:888px;width:111px;height:18px;background:#cfdceb"></div>
<svg style="left:1808px;top:892px" width="6" height="10"><path d="M5 0v9L0 4.500z" fill="#3e5270"/></svg>
<div style="left:1819px;top:889px;width:17px;height:15px;background:#dfe8f6;border:1px solid #a3b7d2;border-radius:2px"></div>
<svg style="left:1900px;top:892px" width="6" height="10"><path d="M0 0v9l5-4.500z" fill="#3e5270"/></svg>
<div style="left:1087px;top:911px;width:16px;height:2px;background-image:radial-gradient(#7d90ab 1px,transparent 1px);background-size:3px 2px"></div>

<!-- messages -->
<div style="left:272px;top:916px;width:1646px;height:35px;background:#fff;border-top:1px solid #8ea6c6;border-bottom:2px solid #a3b7d1"></div>
<div style="left:273px;top:917px;width:1627px;height:17px;background:#ebebeb;border-bottom:1px solid #d8d8d8"></div>
<svg style="left:276px;top:919px" width="15" height="15"><use href="#info" width="15" height="15"/></svg>
<svg style="left:276px;top:935px" width="15" height="15"><use href="#info" width="15" height="15"/></svg>
<div class="b" style="left:296px;top:919px;width:347px;height:30px"></div>
<div style="left:1900px;top:917px;width:18px;height:33px;background:#d4dfef"></div>
<svg style="left:1903px;top:922px" width="11" height="6"><path d="M5.500 0l5 5H0z" fill="#5a6d8c"/></svg>
<svg style="left:1903px;top:939px" width="11" height="6"><path d="M5.500 5l5-5H0z" fill="#5a6d8c"/></svg>

<!-- status bar -->
<div style="left:0;top:951px;width:1918px;height:27px;background:linear-gradient(#e3ecf7,#aabbcf);border-top:1px solid #93a9c7"></div>
<div class="t" style="left:5px;top:957px;font-size:11.500px">Datensatz 1 von 1 ...</div>
<div style="left:1370px;top:957px;width:199px;height:17px;background:#e8eef6;border:1px solid #b3c2d6"></div>
<div style="left:1577px;top:953px;width:1px;height:24px;background:#f0f4f9"></div><div style="left:1630px;top:953px;width:1px;height:24px;background:#f0f4f9"></div><div style="left:1683px;top:953px;width:1px;height:24px;background:#f0f4f9"></div><div style="left:1825px;top:953px;width:1px;height:24px;background:#f0f4f9"></div>
<div class="t" style="left:1584px;top:957px">58_rc</div><svg style="left:1615px;top:964px" width="7" height="5"><path d="M0 0h6L3 3.500z" fill="#5d6f8c"/></svg>
<div class="t" style="left:1638px;top:957px">WFW</div><svg style="left:1668px;top:964px" width="7" height="5"><path d="M0 0h6L3 3.500z" fill="#5d6f8c"/></svg>
<div class="t" style="left:1690px;top:957px">8022004 | Release 12.0</div><svg style="left:1809px;top:964px" width="7" height="5"><path d="M0 0h6L3 3.500z" fill="#5d6f8c"/></svg>
<div class="t" style="left:1833px;top:957px">24.25.0.274886</div>

<!-- taskbar -->
<div style="left:0;top:978px;width:1918px;height:30px;background:linear-gradient(90deg,#011a24,#011a24 60%,#040f28)"></div>
<svg style="left:10px;top:986px" width="16" height="16"><path d="M0 2.300l6.800-1V7.500H0zM7.700 1.200L16 0v7.500H7.700zM0 8.300h6.800v6.300L0 13.700zM7.700 8.300H16V16l-8.300-1.200z" fill="#fff"/></svg>
<svg style="left:46px;top:986px" width="16" height="16"><circle cx="10" cy="6" r="5" fill="none" stroke="#fff" stroke-width="1.300"/><path d="M6.500 9.500L1 15" stroke="#fff" stroke-width="1.500"/></svg>
<svg style="left:82px;top:986px" width="17" height="16"><path d="M2.500 3.500h11v9h-11zM1 .7h14M1 15.300h14" fill="none" stroke="#fff" stroke-width="1.200"/><path d="M16 1v3M16 6v4M16 12v3" stroke="#fff" stroke-width="1.200"/></svg>
<svg style="left:121px;top:985px" width="17" height="17" viewBox="0 0 17 17"><circle cx="8.500" cy="8.500" r="8" fill="#2fb4c8"/><path d="M.5 8.500A8 8 0 0 1 16 6c-2-2-7-2-8 1-3-1-6 0-7.500 1.500z" fill="#1b7bcf"/><path d="M16.500 8c-1 4-5 3-7 2 1 3 4 5 7 1z" fill="#7fd44c"/><rect x="1" y="10" width="7" height="6" fill="#a85a1e"/><rect x="1" y="12" width="7" height="1.500" fill="#e9b040"/></svg>
<svg style="left:158px;top:986px" width="17" height="15" viewBox="0 0 17 15"><path d="M0 1h6l2 2h9v12H0z" fill="#f0b83c"/><rect x="0" y="4" width="17" height="11" fill="#fbd35f"/><rect x="5" y="8" width="7" height="6" fill="#2f8ed4"/><rect x="7" y="10" width="3" height="4" fill="#fbd35f"/></svg>
<div style="left:152px;top:1006px;width:28px;height:2px;background:#76b9ed"></div>
<div style="left:185px;top:978px;width:36px;height:30px;background:#3a4d58"></div>
<div style="left:185px;top:1006px;width:36px;height:2px;background:#76b9ed"></div>
<svg style="left:195px;top:985px" width="16" height="16" viewBox="0 0 16 16"><circle cx="8" cy="8" r="8" fill="#3c4ea6"/><path d="M3 13L8 2h2.500L5 14zM7 14l5-11h2L9 15z" fill="#fff"/></svg>
<svg style="left:1760px;top:988px" width="13" height="8"><path d="M1 7l5.500-5.500L12 7" fill="none" stroke="#fff" stroke-width="1.200"/></svg>
<svg style="left:1782px;top:986px" width="17" height="15"><path d="M5 .5h11v10H5zM7.500 13.500h7M11 11v2.500M.5 3.500H4v6H.5zM2.200 9.500v3h3" fill="none" stroke="#fff" stroke-width="1.100"/></svg>
<svg style="left:1806px;top:986px" width="17" height="15"><path d="M.5 5h3L8 1v13L3.500 10h-3zM10 5c1 1.500 1 3.500 0 5M12 3c2 2.500 2 6.500 0 9M14.500 1c3 3.500 3 9.500 0 13" fill="none" stroke="#fff" stroke-width="1.100"/></svg>
<div class="t" style="left:1833px;top:985px;color:#06121c;font-size:12px">14:12</div>
<svg style="left:1877px;top:985px" width="17" height="16"><path d="M.5.500h16v11h-6l-2 3-2-3h-6z" fill="none" stroke="#fff" stroke-width="1.100"/></svg>
<div style="left:1913px;top:978px;width:1px;height:30px;background:#3a4652"></div>
</body></html>
